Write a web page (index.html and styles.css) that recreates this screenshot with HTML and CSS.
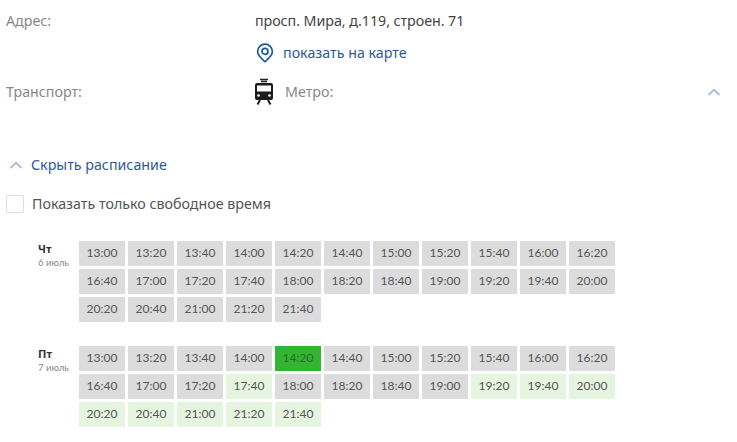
FILE: index.html
```html
<!DOCTYPE html>
<html lang="ru">
<head>
<meta charset="utf-8">
<title>Расписание</title>
<link rel="stylesheet" href="styles.css">
</head>
<body>
<div class="info">
  <div class="row row-address">
    <div class="label">Адрес:</div>
    <div class="value">
      <div class="address">просп. Мира, д.119, строен. 71</div>
      <a class="map-link">
        <svg class="pin" width="18" height="20" viewBox="0 0 18 20"><path d="M9 18.600 C6 15.800 1.600 13 1.600 8.600 A7.400 7.400 0 0 1 16.400 8.600 C16.400 13 12 15.800 9 18.600Z" fill="none" stroke="#1d5a9c" stroke-width="1.700"/><circle cx="9" cy="8.400" r="3" fill="none" stroke="#1d5a9c" stroke-width="1.700"/></svg>
        <span>показать на карте</span>
      </a>
    </div>
  </div>
  <div class="row row-transport">
    <div class="label">Транспорт:</div>
    <div class="value transport">
      <svg class="train" width="20" height="27" viewBox="0 0 20 27"><path d="M6 1.500h8M7 3.500h6" stroke="#222" stroke-width="1.400"/><path d="M3 5h14a2 2 0 0 1 2 2v13a2 2 0 0 1-2 2H3a2 2 0 0 1-2-2V7a2 2 0 0 1 2-2Z" fill="#1c1c1c"/><rect x="3" y="7.500" width="14" height="6" fill="#fff"/><circle cx="4.500" cy="17.500" r="1.300" fill="#fff"/><circle cx="15.500" cy="17.500" r="1.300" fill="#fff"/><path d="M6 22l-2.500 4.500M14 22l2.500 4.500" stroke="#1c1c1c" stroke-width="2"/></svg>
      <span class="metro">Метро:</span>
      <svg class="chev chev-right" width="14" height="8" viewBox="0 0 14 8"><path d="M1.500 7 7 1.800 12.500 7" fill="none" stroke="#a9bfd6" stroke-width="1.800"/></svg>
    </div>
  </div>
</div>

<a class="toggle">
  <svg class="chev" width="14" height="8" viewBox="0 0 14 8"><path d="M1.500 7 7 1.800 12.500 7" fill="none" stroke="#a9bfd6" stroke-width="1.800"/></svg>
  <span>Скрыть расписание</span>
</a>

<label class="check">
  <span class="box"></span>
  <span>Показать только свободное время</span>
</label>

<div class="day day-first">
  <div class="date"><b>Чт</b><small>6 июль</small></div>
  <div class="slots">
    <span class="slot">13:00</span><span class="slot">13:20</span><span class="slot">13:40</span><span class="slot">14:00</span><span class="slot">14:20</span><span class="slot">14:40</span><span class="slot">15:00</span><span class="slot">15:20</span><span class="slot">15:40</span><span class="slot">16:00</span><span class="slot">16:20</span>
    <span class="slot">16:40</span><span class="slot">17:00</span><span class="slot">17:20</span><span class="slot">17:40</span><span class="slot">18:00</span><span class="slot">18:20</span><span class="slot">18:40</span><span class="slot">19:00</span><span class="slot">19:20</span><span class="slot">19:40</span><span class="slot">20:00</span>
    <span class="slot">20:20</span><span class="slot">20:40</span><span class="slot">21:00</span><span class="slot">21:20</span><span class="slot">21:40</span>
  </div>
</div>

<div class="day day-second">
  <div class="date"><b>Пт</b><small>7 июль</small></div>
  <div class="slots">
    <span class="slot">13:00</span><span class="slot">13:20</span><span class="slot">13:40</span><span class="slot">14:00</span><span class="slot selected">14:20</span><span class="slot">14:40</span><span class="slot">15:00</span><span class="slot">15:20</span><span class="slot">15:40</span><span class="slot">16:00</span><span class="slot">16:20</span>
    <span class="slot">16:40</span><span class="slot">17:00</span><span class="slot">17:20</span><span class="slot free">17:40</span><span class="slot">18:00</span><span class="slot">18:20</span><span class="slot">18:40</span><span class="slot">19:00</span><span class="slot free">19:20</span><span class="slot free">19:40</span><span class="slot free">20:00</span>
    <span class="slot free">20:20</span><span class="slot free">20:40</span><span class="slot free">21:00</span><span class="slot free">21:20</span><span class="slot free">21:40</span>
  </div>
</div>
</body>
</html>
```
FILE: styles.css
```css
* { box-sizing: border-box; }
html, body { margin: 0; background: #fff; }
body {
  width: 737px;
  height: 442px;
  overflow: hidden;
  font-family: "Noto Sans", "Open Sans", sans-serif;
  font-size: 14.25px;
  line-height: 20px;
  color: #444;
  padding-top: 11px;
}
.row { display: flex; padding-left: 6px; }
.label { width: 250px; color: #888; }
.value { flex: 1; }
.address { color: #444; margin-left: -1px; letter-spacing: -0.05px; }
.map-link { display: flex; align-items: center; margin-top: 12px; color: #2f5a93; }
.pin { margin-right: 9px; }
.row-transport { margin-top: 15px; align-items: center; }
.transport { display: flex; align-items: center; height: 27px; padding-right: 16px; margin-left: -2px; }
.train { flex: none; }
.metro { margin-left: 11px; color: #888; }
.chev-right { margin-left: auto; }
.toggle { display: flex; align-items: center; margin: 50px 0 0 9px; color: #2f5a93; }
.toggle span { margin-left: 8px; }
.check { display: flex; align-items: center; margin: 19px 0 0 6px; color: #555; }
.box { width: 18px; height: 18px; border: 1px solid #ddd; border-radius: 2px; margin-right: 8px; }
.day { display: flex; padding-left: 38px; }
.day-first { margin-top: 27px; }
.day-second { margin-top: 24px; }
.date { width: 41px; padding-top: 1px; }
.date b { display: block; font-size: 11px; line-height: 14px; color: #333; }
.date small { display: block; font-size: 9.500px; line-height: 14px; color: #888; font-family: Lato, sans-serif; }
.slots { display: grid; grid-template-columns: repeat(11, 46px); grid-auto-rows: 25px; gap: 3px; }
.slot {
  display: flex;
  align-items: center;
  justify-content: center;
  padding-bottom: 1px;
  background: #dcdcdc;
  color: #555;
  font-family: Lato, sans-serif;
  font-size: 12px;
}
.free { background: #e6f5e0; }
.selected { background: #33b533; color: #2b6a2b; }
```
